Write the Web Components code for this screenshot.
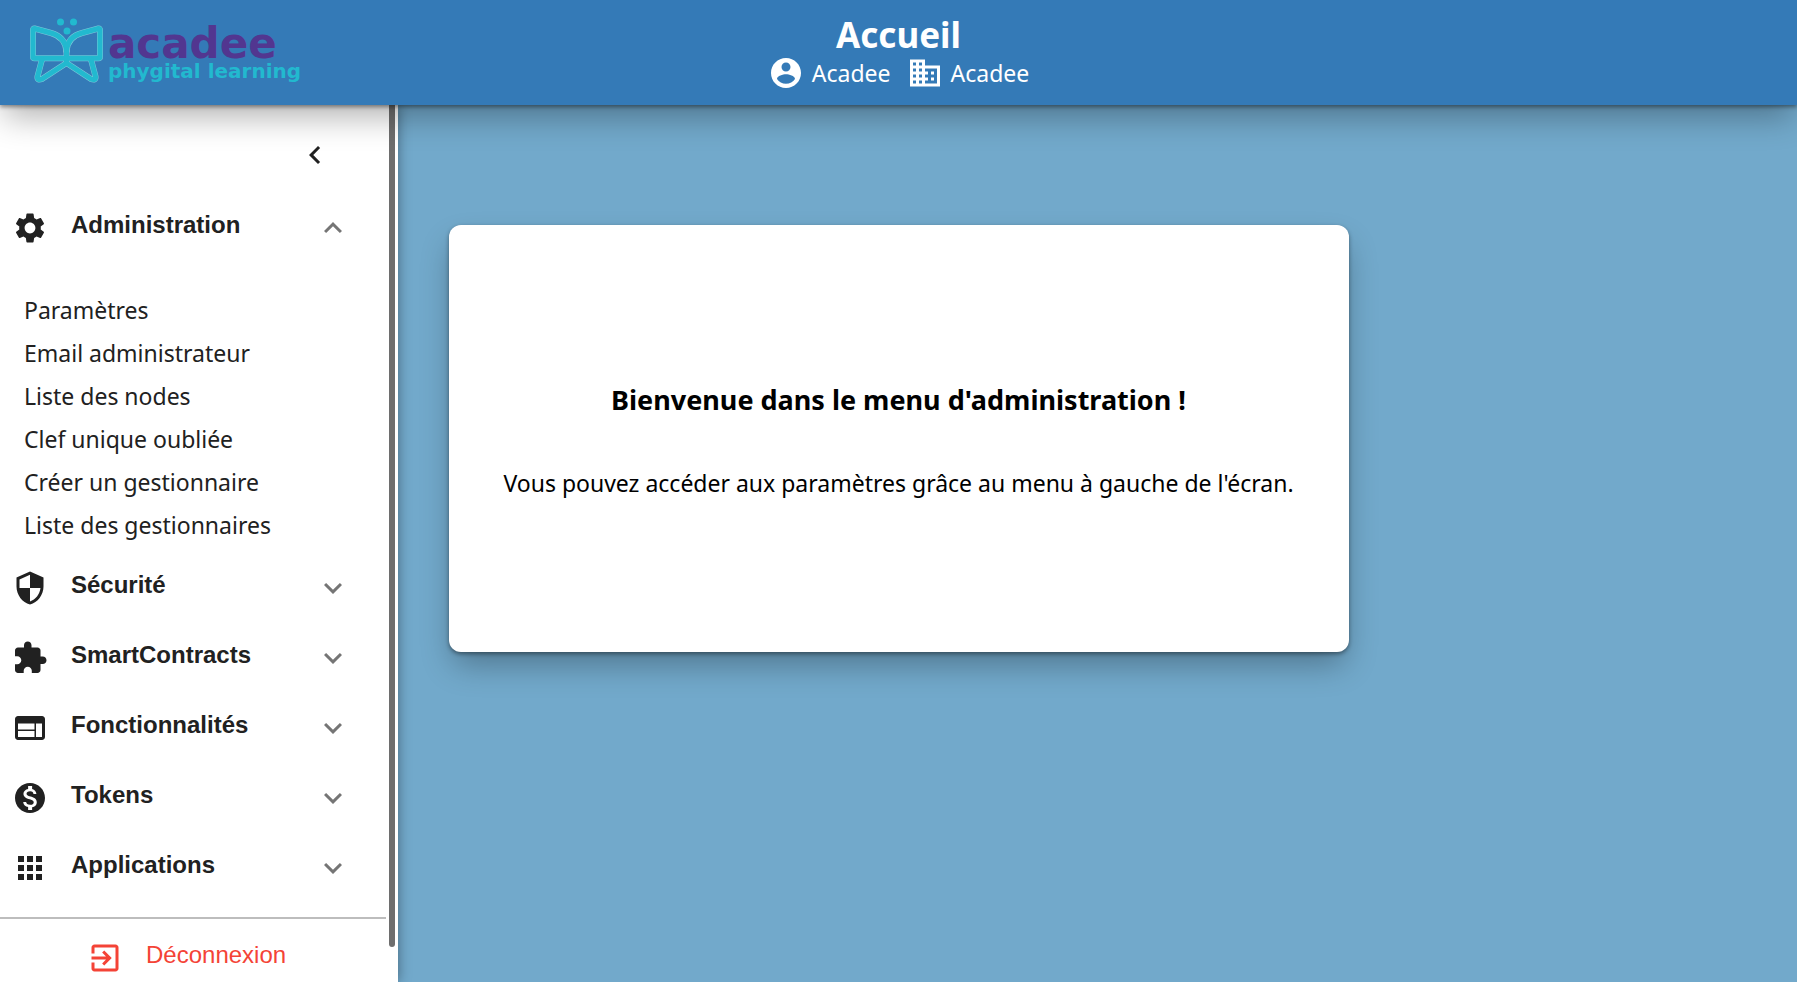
<!DOCTYPE html>
<html lang="fr">
<head>
<meta charset="utf-8">
<title>Accueil</title>
<style>
html, body { margin: 0; height: 100%; }
body { font-family: "Noto Sans", sans-serif; font-size: 23px; color: #212121; background: #72a9cb; }
</style>
</head>
<body>
<acadee-app></acadee-app>
<script>
const ICONS = {
  gear: 'M19.14 12.94c.04-.3.06-.61.06-.94 0-.32-.02-.64-.07-.94l2.03-1.58c.18-.14.23-.41.12-.61l-1.92-3.32c-.12-.22-.37-.29-.59-.22l-2.39.96c-.5-.38-1.03-.7-1.62-.94l-.36-2.54c-.04-.24-.24-.41-.48-.41h-3.84c-.24 0-.43.17-.47.41l-.36 2.54c-.59.24-1.13.57-1.62.94l-2.39-.96c-.22-.08-.47 0-.59.22L2.74 8.87c-.12.21-.08.47.12.61l2.03 1.58c-.05.3-.09.63-.09.94s.02.64.07.94l-2.03 1.58c-.18.14-.23.41-.12.61l1.92 3.32c.12.22.37.29.59.22l2.39-.96c.5.38 1.03.7 1.62.94l.36 2.54c.05.24.24.41.48.41h3.84c.24 0 .44-.17.47-.41l.36-2.54c.59-.24 1.13-.56 1.62-.94l2.39.96c.22.08.47 0 .59-.22l1.92-3.32c.12-.22.07-.47-.12-.61l-2.01-1.58zM12 15.6c-1.98 0-3.6-1.62-3.6-3.6s1.62-3.6 3.6-3.6 3.6 1.62 3.6 3.6-1.62 3.6-3.6 3.6z',
  shield: 'M12 1L3 5v6c0 5.55 3.84 10.74 9 12 5.16-1.26 9-6.45 9-12V5l-9-4zm0 10.99h7c-.53 4.12-3.28 7.79-7 8.94V12H5V6.3l7-3.11v8.8z',
  puzzle: 'M20.5 11H19V7c0-1.1-.9-2-2-2h-4V3.5C13 2.12 11.88 1 10.5 1S8 2.12 8 3.5V5H4c-1.1 0-1.99.9-1.99 2v3.8H3.5c1.49 0 2.7 1.21 2.7 2.7s-1.21 2.7-2.7 2.7H2V20c0 1.1.9 2 2 2h3.8v-1.5c0-1.49 1.21-2.7 2.7-2.7 1.49 0 2.7 1.21 2.7 2.7V22H17c1.1 0 2-.9 2-2v-4h1.5c1.38 0 2.5-1.12 2.5-2.5S21.88 11 20.5 11z',
  web: 'M20 4H4c-1.1 0-1.99.9-1.99 2L2 18c0 1.1.9 2 2 2h16c1.1 0 2-.9 2-2V6c0-1.1-.9-2-2-2zm-5 14H4v-4h11v4zm0-5H4V9h11v4zm5 5h-4V9h4v9z',
  coin: 'M12 2C6.48 2 2 6.48 2 12s4.48 10 10 10 10-4.48 10-10S17.52 2 12 2zm1.41 16.09V20h-2.67v-1.93c-1.71-.36-3.16-1.46-3.27-3.4h1.96c.1 1.05.82 1.87 2.65 1.87 1.96 0 2.4-.98 2.4-1.59 0-.83-.44-1.61-2.67-2.14-2.48-.6-4.18-1.62-4.18-3.67 0-1.72 1.39-2.84 3.11-3.21V4h2.67v1.95c1.86.45 2.79 1.86 2.85 3.39H14.3c-.05-1.11-.64-1.87-2.22-1.87-1.5 0-2.4.68-2.4 1.64 0 .84.65 1.39 2.67 1.91s4.18 1.39 4.18 3.91c-.01 1.83-1.38 2.83-3.12 3.16z',
  apps: 'M4 8h4V4H4v4zm6 12h4v-4h-4v4zm-6 0h4v-4H4v4zm0-6h4v-4H4v4zm6 0h4v-4h-4v4zm6-10v4h4V4h-4zm-6 4h4V4h-4v4zm6 6h4v-4h-4v4zm0 6h4v-4h-4v4z',
  more: 'M16.59 8.59L12 13.17 7.41 8.59 6 10l6 6 6-6z',
  less: 'M12 8l-6 6 1.41 1.41L12 10.83l4.59 4.58L18 14z',
  left: 'M15.41 7.41L14 6l-6 6 6 6 1.41-1.41L10.83 12z',
  exit: 'M10.09 15.59L11.5 17l5-5-5-5-1.41 1.41L12.67 11H3v2h9.67l-2.58 2.59zM19 3H5c-1.11 0-2 .9-2 2v4h2V5h14v14H5v-4H3v4c0 1.1.89 2 2 2h14c1.1 0 2-.9 2-2V5c0-1.1-.9-2-2-2z',
  account: 'M12 2C6.48 2 2 6.48 2 12s4.48 10 10 10 10-4.48 10-10S17.52 2 12 2zm0 3c1.66 0 3 1.34 3 3s-1.34 3-3 3-3-1.34-3-3 1.34-3 3-3zm0 14.2c-2.5 0-4.71-1.28-6-3.22.03-1.99 4-3.08 6-3.08 1.99 0 5.97 1.09 6 3.08-1.29 1.94-3.5 3.22-6 3.22z',
  business: 'M12 7V3H2v18h20V7H12zM6 19H4v-2h2v2zm0-4H4v-2h2v2zm0-4H4V9h2v2zm0-4H4V5h2v2zm4 12H8v-2h2v2zm0-4H8v-2h2v2zm0-4H8V9h2v2zm0-4H8V5h2v2zm10 12h-8v-2h2v-2h-2v-2h2v-2h-2V9h8v10zm-2-8h-2v2h2v-2zm0 4h-2v2h2v-2z'
};

function define(name, html, setup) {
  customElements.define(name, class extends HTMLElement {
    constructor() {
      super();
      const t = document.createElement('template');
      t.innerHTML = html;
      this.attachShadow({ mode: 'open' }).append(t.content.cloneNode(true));
    }
    connectedCallback() { if (setup) setup(this, this.shadowRoot); }
  });
}

define('md-icon', `
<style>
:host { display: block; flex: none; width: 36px; height: 36px; }
svg { display: block; width: 100%; height: 100%; fill: currentColor; }
</style>
<svg viewBox="0 0 24 24" aria-hidden="true"><path/></svg>`,
(el, root) => root.querySelector('path').setAttribute('d', ICONS[el.getAttribute('name')]));

const WINGS = `
  <path d="M38.500 36C37.500 25 30 20 23 18L6.500 13.500Q5 13.300 5 15V41.500Q5 43.300 6.500 43.300H36"/>
  <path d="M38.500 36C39.500 25 46 20 54 18L70.500 13.500Q72 13.300 72 15V41.500Q72 43.300 70.500 43.300H41"/>
  <path d="M14 44.500L9.500 61.500Q9 66 14 64L38.500 48"/>
  <path d="M63 44.500L67.500 61.500Q68 66 63 64L38.500 48"/>
  <path d="M38.500 35V48"/>`;
const DOTS = '<path d="M32.500 7h.01M45.500 7h.01M39 16h.01"/>';

define('acadee-logo', `
<style>
:host { display: flex; align-items: center; }
svg { display: block; width: 76px; height: 75px; flex: none; }
.words { display: flex; flex-direction: column; padding: 10px 0 0 4px; font-family: "DejaVu Sans", Verdana, sans-serif; font-weight: bold; white-space: nowrap; }
.name { font-size: 42px; line-height: 27px; color: #523690; }
.tag { font-size: 20px; line-height: 28px; color: #22b9cf; }
</style>
<svg viewBox="0 0 76 75" aria-hidden="true" fill="none" stroke-linejoin="round" stroke-linecap="round">
  <g stroke="#7cc6d9" stroke-width="6">${WINGS}</g>
  <g stroke="#22b9cf" stroke-width="5">${WINGS}</g>
  <g stroke="#22b9cf" stroke-width="7">${DOTS}</g>
</svg>
<div class="words"><span class="name">acadee</span><span class="tag">phygital learning</span></div>`);

define('app-header', `
<style>
:host { display: grid; grid-template-columns: 1fr auto 1fr; height: 105px; flex: none; background: #347ab7; color: #fff; position: relative; z-index: 2;
  box-shadow: 0 2px 4px rgba(0,0,0,.4), 0 16px 32px -4px rgba(0,0,0,.3); }
acadee-logo { padding-left: 28px; }
.title { display: flex; flex-direction: column; align-items: center; padding-top: 15px; }
h1 { margin: 0; font-size: 35px; line-height: 40px; }
.who { display: flex; gap: 16px; }
.who span { display: flex; align-items: center; gap: 8px; line-height: 36px; }
</style>
<acadee-logo></acadee-logo>
<div class="title"><h1>Accueil</h1>
<div class="who"><span><md-icon name="account"></md-icon>Acadee</span><span><md-icon name="business"></md-icon>Acadee</span></div></div>`);

define('menu-group', `
<style>
:host { display: block; }
button { all: unset; box-sizing: border-box; display: flex; align-items: center; width: 100%; height: 70px; padding: 0 35px 0 12px; cursor: pointer; font: bold 24px/36px "Liberation Sans", Arial, sans-serif; }
.label { flex: 1; padding: 0 0 6px 23px; }
.arrow { color: #757575; }
.links { padding: 26px 0 6px; }
</style>
<button type="button"><span class="label"></span></button>`,
(el, root) => {
  const open = el.hasAttribute('open');
  const button = root.querySelector('button');
  button.setAttribute('aria-expanded', open);
  root.querySelector('.label').textContent = el.getAttribute('label');
  const icon = n => { const i = document.createElement('md-icon'); i.setAttribute('name', n); return i; };
  const arrow = icon(open ? 'less' : 'more');
  arrow.className = 'arrow';
  button.prepend(icon(el.getAttribute('icon')));
  button.append(arrow);
  if (open) {
    const links = document.createElement('div');
    links.className = 'links';
    links.append(document.createElement('slot'));
    root.append(links);
  }
});

define('menu-link', `
<style>
:host { display: block; }
a { display: block; padding-left: 24px; line-height: 43px; color: inherit; text-decoration: none; }
</style>
<a href="#"><slot></slot></a>`);

define('side-menu', `
<style>
:host { display: grid; grid-template-columns: 1fr 12px; width: 398px; flex: none; background: #fff; position: relative; box-shadow: 0 0 12px rgba(0,0,0,.4); }
.body { display: flex; flex-direction: column; }
.back { all: unset; cursor: pointer; align-self: flex-end; margin: 32px 53px 20px 0; }
.logout { all: unset; cursor: pointer; display: flex; gap: 23px; margin-top: 14px; border-top: 2px solid #bdbdbd; padding: 21px 0 0 87px; color: #f44336; font: 24px/36px "Liberation Sans", Arial, sans-serif; }
.logout span { padding-bottom: 6px; line-height: 30px; }
.thumb { width: 6px; height: 96%; margin-left: 3px; background: #6e6e6e; border-radius: 0 0 3px 3px; }
</style>
<div class="body">
  <button class="back" type="button" aria-label="Replier le menu"><md-icon name="left"></md-icon></button>
  <nav><slot></slot></nav>
  <button class="logout" type="button"><md-icon name="exit"></md-icon><span>Déconnexion</span></button>
</div>
<div class="thumb"></div>`);

define('welcome-card', `
<style>
:host { display: block; box-sizing: border-box; width: 100%; max-width: 900px; padding: 155px 24px 151px; background: #fff; color: #000; border-radius: 12px; text-align: center;
  box-shadow: 0 2px 4px rgba(0,0,0,.4), 0 16px 32px -4px rgba(0,0,0,.3); }
h2 { margin: 0 0 45px; font-size: 27px; line-height: 40px; }
p { margin: 0; line-height: 36px; }
</style>
<h2><slot name="title"></slot></h2>
<p><slot></slot></p>`);

define('acadee-app', `
<style>
:host { display: flex; flex-direction: column; min-height: 100%; }
.page { flex: 1; display: flex; }
main { flex: 1; padding: 120px 24px 24px max(24px, calc(50vw - 848px)); }
</style>
<app-header></app-header>
<div class="page">
  <side-menu>
    <menu-group open icon="gear" label="Administration">
      <menu-link>Paramètres</menu-link>
      <menu-link>Email administrateur</menu-link>
      <menu-link>Liste des nodes</menu-link>
      <menu-link>Clef unique oubliée</menu-link>
      <menu-link>Créer un gestionnaire</menu-link>
      <menu-link>Liste des gestionnaires</menu-link>
    </menu-group>
    <menu-group icon="shield" label="Sécurité"></menu-group>
    <menu-group icon="puzzle" label="SmartContracts"></menu-group>
    <menu-group icon="web" label="Fonctionnalités"></menu-group>
    <menu-group icon="coin" label="Tokens"></menu-group>
    <menu-group icon="apps" label="Applications"></menu-group>
  </side-menu>
  <main>
    <welcome-card>
      <span slot="title">Bienvenue dans le menu d'administration !</span>
      Vous pouvez accéder aux paramètres grâce au menu à gauche de l'écran.
    </welcome-card>
  </main>
</div>`);
</script>
</body>
</html>
